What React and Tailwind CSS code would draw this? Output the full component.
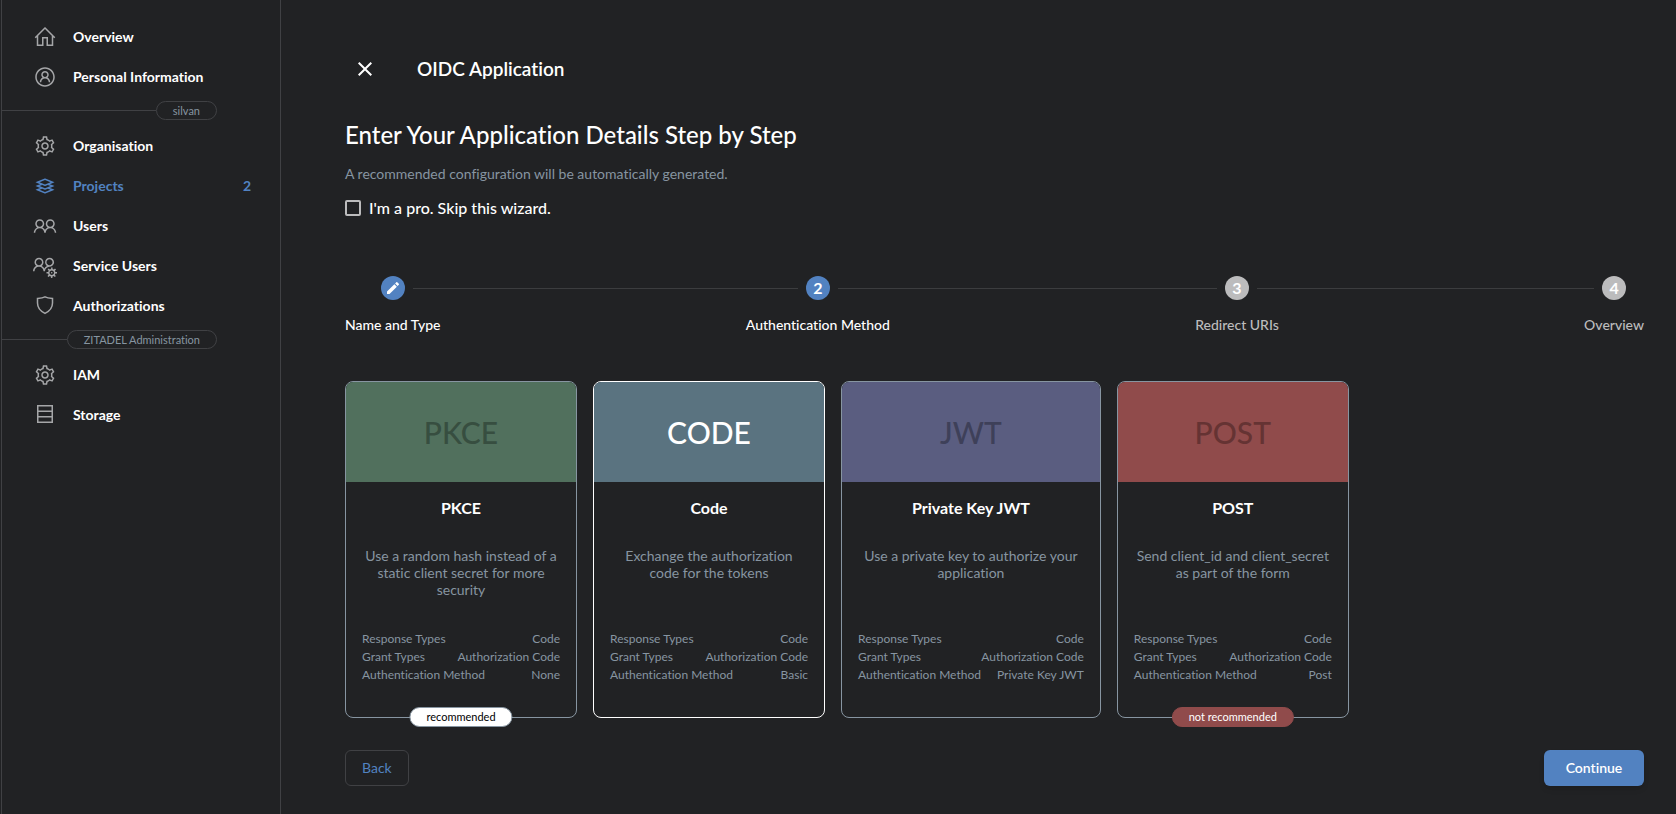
import React from "react";
import {
  LiaHomeSolid,
  LiaUserCircle,
  LiaCogSolid,
  LiaLayerGroupSolid,
  LiaUserFriendsSolid,
  LiaUsersCogSolid,
} from "react-icons/lia";
import { MdClose, MdEdit } from "react-icons/md";

function ShieldIcon({ className }) {
  return (
    <svg viewBox="0 0 24 24" fill="none" stroke="currentColor" strokeWidth="1.5" className={className} aria-hidden="true">
      <path d="M12 2.900c2.200 1.300 4.700 1.400 7.500 1.500v4.700c0 5-3.200 8.300-7.500 10.300-4.300-2-7.500-5.300-7.500-10.300V4.400c2.800-.1 5.300-.2 7.500-1.500z" />
    </svg>
  );
}

function StorageIcon({ className }) {
  return (
    <svg viewBox="0 0 24 24" fill="none" stroke="currentColor" strokeWidth="1.5" className={className} aria-hidden="true">
      <path d="M4.750 2.750h14.500v16.500H4.750zM4.750 8.250h14.500M4.750 13.750h14.500" />
    </svg>
  );
}

function NavItem({ icon: Icon, label, count, active }) {
  return (
    <a
      href="#"
      aria-current={active ? "page" : undefined}
      className={`flex h-10 items-center gap-4 pr-[29px] pl-[31px] text-sm font-bold ${active ? "text-[#5282c1]" : "text-white"}`}
    >
      <Icon className={`size-6 shrink-0 ${active ? "" : "text-[#a5a6a8]"}`} />
      <span className="flex-1">{label}</span>
      {count && <span>{count}</span>}
    </a>
  );
}

function NavDivider({ label }) {
  return (
    <div className="mt-1 mb-1.5 flex items-center pr-[63px]">
      <span className="h-px flex-1 bg-[#404144]" />
      <span className="rounded-full border border-[#404144] px-4 text-[11px] leading-[17px] text-[#8795a1]">{label}</span>
    </div>
  );
}

const steps = [
  { label: "Name and Type", state: "done" },
  { label: "Authentication Method", state: "current" },
  { label: "Redirect URIs", state: "todo" },
  { label: "Overview", state: "todo" },
];

function Stepper() {
  return (
    <ol className="flex">
      {steps.map((step, i) => {
        const first = i === 0;
        const last = i === steps.length - 1;
        const todo = step.state === "todo";
        return (
          <React.Fragment key={step.label}>
            {!first && (
              <li aria-hidden="true" className="flex h-6 flex-1 items-center">
                <span className="h-px w-full bg-[#3c3d3f]" />
              </li>
            )}
            <li className="flex flex-col gap-[15px]">
              <div className="flex items-center gap-2">
                <span className={`h-px flex-1 ${first ? "" : "bg-[#3c3d3f]"}`} />
                <span
                  className={`flex size-6 items-center justify-center rounded-full text-base font-bold text-white ${todo ? "bg-[#bcbcbd]" : "bg-[#5282c1]"}`}
                >
                  {step.state === "done" ? <MdEdit className="size-4" /> : i + 1}
                </span>
                <span className={`h-px flex-1 ${last ? "" : "bg-[#3c3d3f]"}`} />
              </div>
              <span className={`text-sm font-medium whitespace-nowrap ${todo ? "text-[#bcbcbd]" : "text-white"}`}>{step.label}</span>
            </li>
          </React.Fragment>
        );
      })}
    </ol>
  );
}

const methods = [
  {
    short: "PKCE",
    title: "PKCE",
    header: "bg-[#51705d] text-[#374e40]",
    description: "Use a random hash instead of a static client secret for more security",
    auth: "None",
    badge: "recommended",
    badgeStyle: "border-[#8795a1] bg-white text-black",
  },
  {
    short: "CODE",
    title: "Code",
    header: "bg-[#5a7380] text-white",
    description: "Exchange the authorization code for the tokens",
    auth: "Basic",
    selected: true,
  },
  {
    short: "JWT",
    title: "Private Key JWT",
    header: "bg-[#5a5d80] text-[#3e4059]",
    description: "Use a private key to authorize your application",
    auth: "Private Key JWT",
  },
  {
    short: "POST",
    title: "POST",
    header: "bg-[#904b4b] text-[#653333]",
    description: "Send client_id and client_secret as part of the form",
    auth: "Post",
    badge: "not recommended",
    badgeStyle: "border-[#904b4b] bg-[#904b4b] text-white",
  },
];

function MethodCard({ method }) {
  const rows = [
    ["Response Types", "Code"],
    ["Grant Types", "Authorization Code"],
    ["Authentication Method", method.auth],
  ];
  return (
    <label
      className={`relative flex w-min min-w-[232px] cursor-pointer flex-col rounded-lg border ${method.selected ? "border-white" : "border-[#8795a1]"}`}
    >
      <input type="radio" name="method" defaultChecked={method.selected} className="sr-only" />
      <span className={`flex h-25 items-center justify-center rounded-t-[7px] text-3xl font-medium ${method.header}`}>
        {method.short}
      </span>
      <span className="mt-3.5 text-center text-base font-bold text-white">{method.title}</span>
      <span className="mt-[27px] h-[68px] px-4 text-center text-sm leading-[17px] text-[#8795a1]">{method.description}</span>
      <span className="mt-[15px] mb-[33px] flex flex-col px-4 text-xs leading-[18px] whitespace-nowrap text-[#8795a1]">
        {rows.map(([name, value]) => (
          <span key={name} className="flex justify-between gap-4">
            <span>{name}</span>
            <span>{value}</span>
          </span>
        ))}
      </span>
      {method.badge && (
        <span
          className={`absolute -bottom-2.5 left-1/2 -translate-x-1/2 rounded-full border px-4 text-[11px] leading-[18px] whitespace-nowrap ${method.badgeStyle}`}
        >
          {method.badge}
        </span>
      )}
    </label>
  );
}

export default function App() {
  return (
    <div className="flex min-h-screen bg-[#212224] pl-px font-['Lato','Open_Sans',sans-serif] text-white [font-variant-ligatures:none]">
      <aside className="w-[280px] shrink-0 border-x border-[#404144] pt-[17px]">
        <nav>
          <NavItem icon={LiaHomeSolid} label="Overview" />
          <NavItem icon={LiaUserCircle} label="Personal Information" />
          <NavDivider label="silvan" />
          <NavItem icon={LiaCogSolid} label="Organisation" />
          <NavItem icon={LiaLayerGroupSolid} label="Projects" count="2" active />
          <NavItem icon={LiaUserFriendsSolid} label="Users" />
          <NavItem icon={LiaUsersCogSolid} label="Service Users" />
          <NavItem icon={ShieldIcon} label="Authorizations" />
          <NavDivider label="ZITADEL Administration" />
          <NavItem icon={LiaCogSolid} label="IAM" />
          <NavItem icon={StorageIcon} label="Storage" />
        </nav>
      </aside>

      <main className="flex-1 pt-[49px] pr-8 pb-7 pl-16">
        <header className="flex items-center gap-8">
          <button type="button" aria-label="Close" className="flex size-10 items-center justify-center">
            <MdClose className="size-6" />
          </button>
          <h1 className="text-[19px] font-semibold">OIDC Application</h1>
        </header>

        <h2 className="mt-[30px] text-2xl font-medium">Enter Your Application Details Step by Step</h2>
        <p className="mt-[13px] text-sm text-[#8795a1]">A recommended configuration will be automatically generated.</p>
        <div className="mt-3 flex items-center gap-2">
          <input id="pro" type="checkbox" className="size-4 appearance-none rounded-xs border-2 border-[#bcbcbd]" />
          <label htmlFor="pro" className="text-base font-medium">
            I'm a pro. Skip this wizard.
          </label>
        </div>

        <div className="mt-14">
          <Stepper />
        </div>

        <div className="mt-[46px] flex flex-wrap gap-4">
          {methods.map((method) => (
            <MethodCard key={method.short} method={method} />
          ))}
        </div>

        <div className="mt-8 flex items-center justify-between">
          <button type="button" className="h-9 rounded-md border border-[#404144] px-4 text-sm text-[#5282c1]">
            Back
          </button>
          <button type="button" className="h-9 w-25 rounded-md bg-[#5282c1] text-sm font-semibold text-white shadow-md">
            Continue
          </button>
        </div>
      </main>
    </div>
  );
}
